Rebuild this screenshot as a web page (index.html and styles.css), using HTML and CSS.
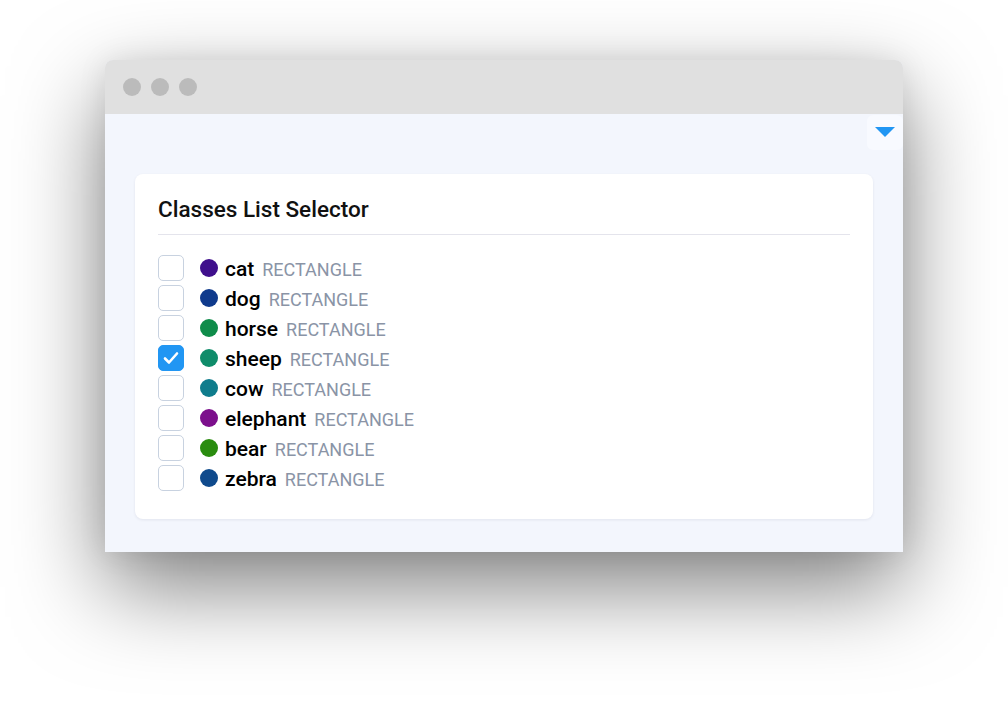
FILE: index.html
```html
<!DOCTYPE html>
<html>
<head>
<meta charset="utf-8">
<link rel="stylesheet" href="styles.css">
</head>
<body>
<div class="window">
  <div class="titlebar">
    <span class="dot"></span><span class="dot"></span><span class="dot"></span>
  </div>
  <div class="content">
    <div class="dropdown"><span class="tri"></span></div>
    <div class="card">
      <h2 class="card-title">Classes List Selector</h2>
      <ul class="list">
        <li class="row"><span class="cb"></span><span class="swatch" style="background:#3f0f8c"></span><span class="name">cat</span><span class="type">RECTANGLE</span></li>
        <li class="row"><span class="cb"></span><span class="swatch" style="background:#0f3a8c"></span><span class="name">dog</span><span class="type">RECTANGLE</span></li>
        <li class="row"><span class="cb"></span><span class="swatch" style="background:#0f8c4a"></span><span class="name">horse</span><span class="type">RECTANGLE</span></li>
        <li class="row"><span class="cb checked"><svg viewBox="0 0 26 26" width="26" height="26"><path d="M7 13.5l4 4 8-9" fill="none" stroke="#fff" stroke-width="2.6" stroke-linecap="round" stroke-linejoin="round"/></svg></span><span class="swatch" style="background:#0f8c6a"></span><span class="name">sheep</span><span class="type">RECTANGLE</span></li>
        <li class="row"><span class="cb"></span><span class="swatch" style="background:#0f7c8c"></span><span class="name">cow</span><span class="type">RECTANGLE</span></li>
        <li class="row"><span class="cb"></span><span class="swatch" style="background:#7c0f8c"></span><span class="name">elephant</span><span class="type">RECTANGLE</span></li>
        <li class="row"><span class="cb"></span><span class="swatch" style="background:#2a8c0f"></span><span class="name">bear</span><span class="type">RECTANGLE</span></li>
        <li class="row"><span class="cb"></span><span class="swatch" style="background:#0f4a8c"></span><span class="name">zebra</span><span class="type">RECTANGLE</span></li>
      </ul>
    </div>
  </div>
</div>
</body>
</html>
```
FILE: styles.css
```css
html, body {
  margin: 0;
  padding: 0;
}
html {
  background: #ffffff;
}
body {
  padding: 60px 105px;
  min-height: 702px;
  box-sizing: border-box;
  font-family: Roboto, "Liberation Sans", sans-serif;
}
.window {
  width: 798px;
  border-radius: 8px 8px 0 0;
  box-shadow: 0 35px 90px rgba(0,0,0,0.5), 0 0 30px rgba(0,0,0,0.08);
  background: #f3f6fd;
}
.titlebar {
  height: 54px;
  background: #e0e0e0;
  border-radius: 8px 8px 0 0;
  display: flex;
  align-items: center;
  padding-left: 18px;
  gap: 10px;
}
.dot {
  width: 18px;
  height: 18px;
  border-radius: 50%;
  background: #bbbbbb;
}
.content {
  position: relative;
  height: 438px;
  box-sizing: border-box;
  padding: 60px 30px 0;
}
.dropdown {
  position: absolute;
  top: 1px;
  right: 0;
  width: 36px;
  height: 35px;
  background: #f8faff;
  border-radius: 6px;
  display: flex;
  justify-content: center;
  padding-top: 12px;
  box-sizing: border-box;
}
.tri {
  width: 0;
  height: 0;
  border-left: 10px solid transparent;
  border-right: 10px solid transparent;
  border-top: 10px solid #2196f3;
}
.card {
  background: #fff;
  border-radius: 8px;
  box-shadow: 0 1px 3px rgba(20,30,60,0.08);
  padding: 23px 23px 28px;
}
.card-title {
  margin: 0;
  font-size: 22.5px;
  font-weight: 500;
  color: #111;
  line-height: 24px;
  padding-bottom: 13px;
  border-bottom: 1px solid #e4e4ec;
}
.list {
  list-style: none;
  margin: 20px 0 0;
  padding: 0;
  display: flex;
  flex-direction: column;
  gap: 4px;
}
.row {
  display: flex;
  align-items: center;
  height: 26px;
}
.cb {
  width: 26px;
  height: 26px;
  box-sizing: border-box;
  border: 1px solid #c8d2e0;
  border-radius: 5px;
  background: #fff;
  display: flex;
}
.cb.checked {
  background: #2196f3;
  border-color: #2196f3;
}
.cb svg {
  margin: -1px;
}
.swatch {
  width: 18px;
  height: 18px;
  border-radius: 50%;
  margin-left: 16px;
  margin-right: 7px;
}
.name {
  font-size: 21px;
  font-weight: 500;
  color: #000;
  margin-right: 8px;
  padding-top: 2px;
}
.type {
  font-size: 18px;
  color: #8a94a6;
  padding-top: 2px;
}
```
